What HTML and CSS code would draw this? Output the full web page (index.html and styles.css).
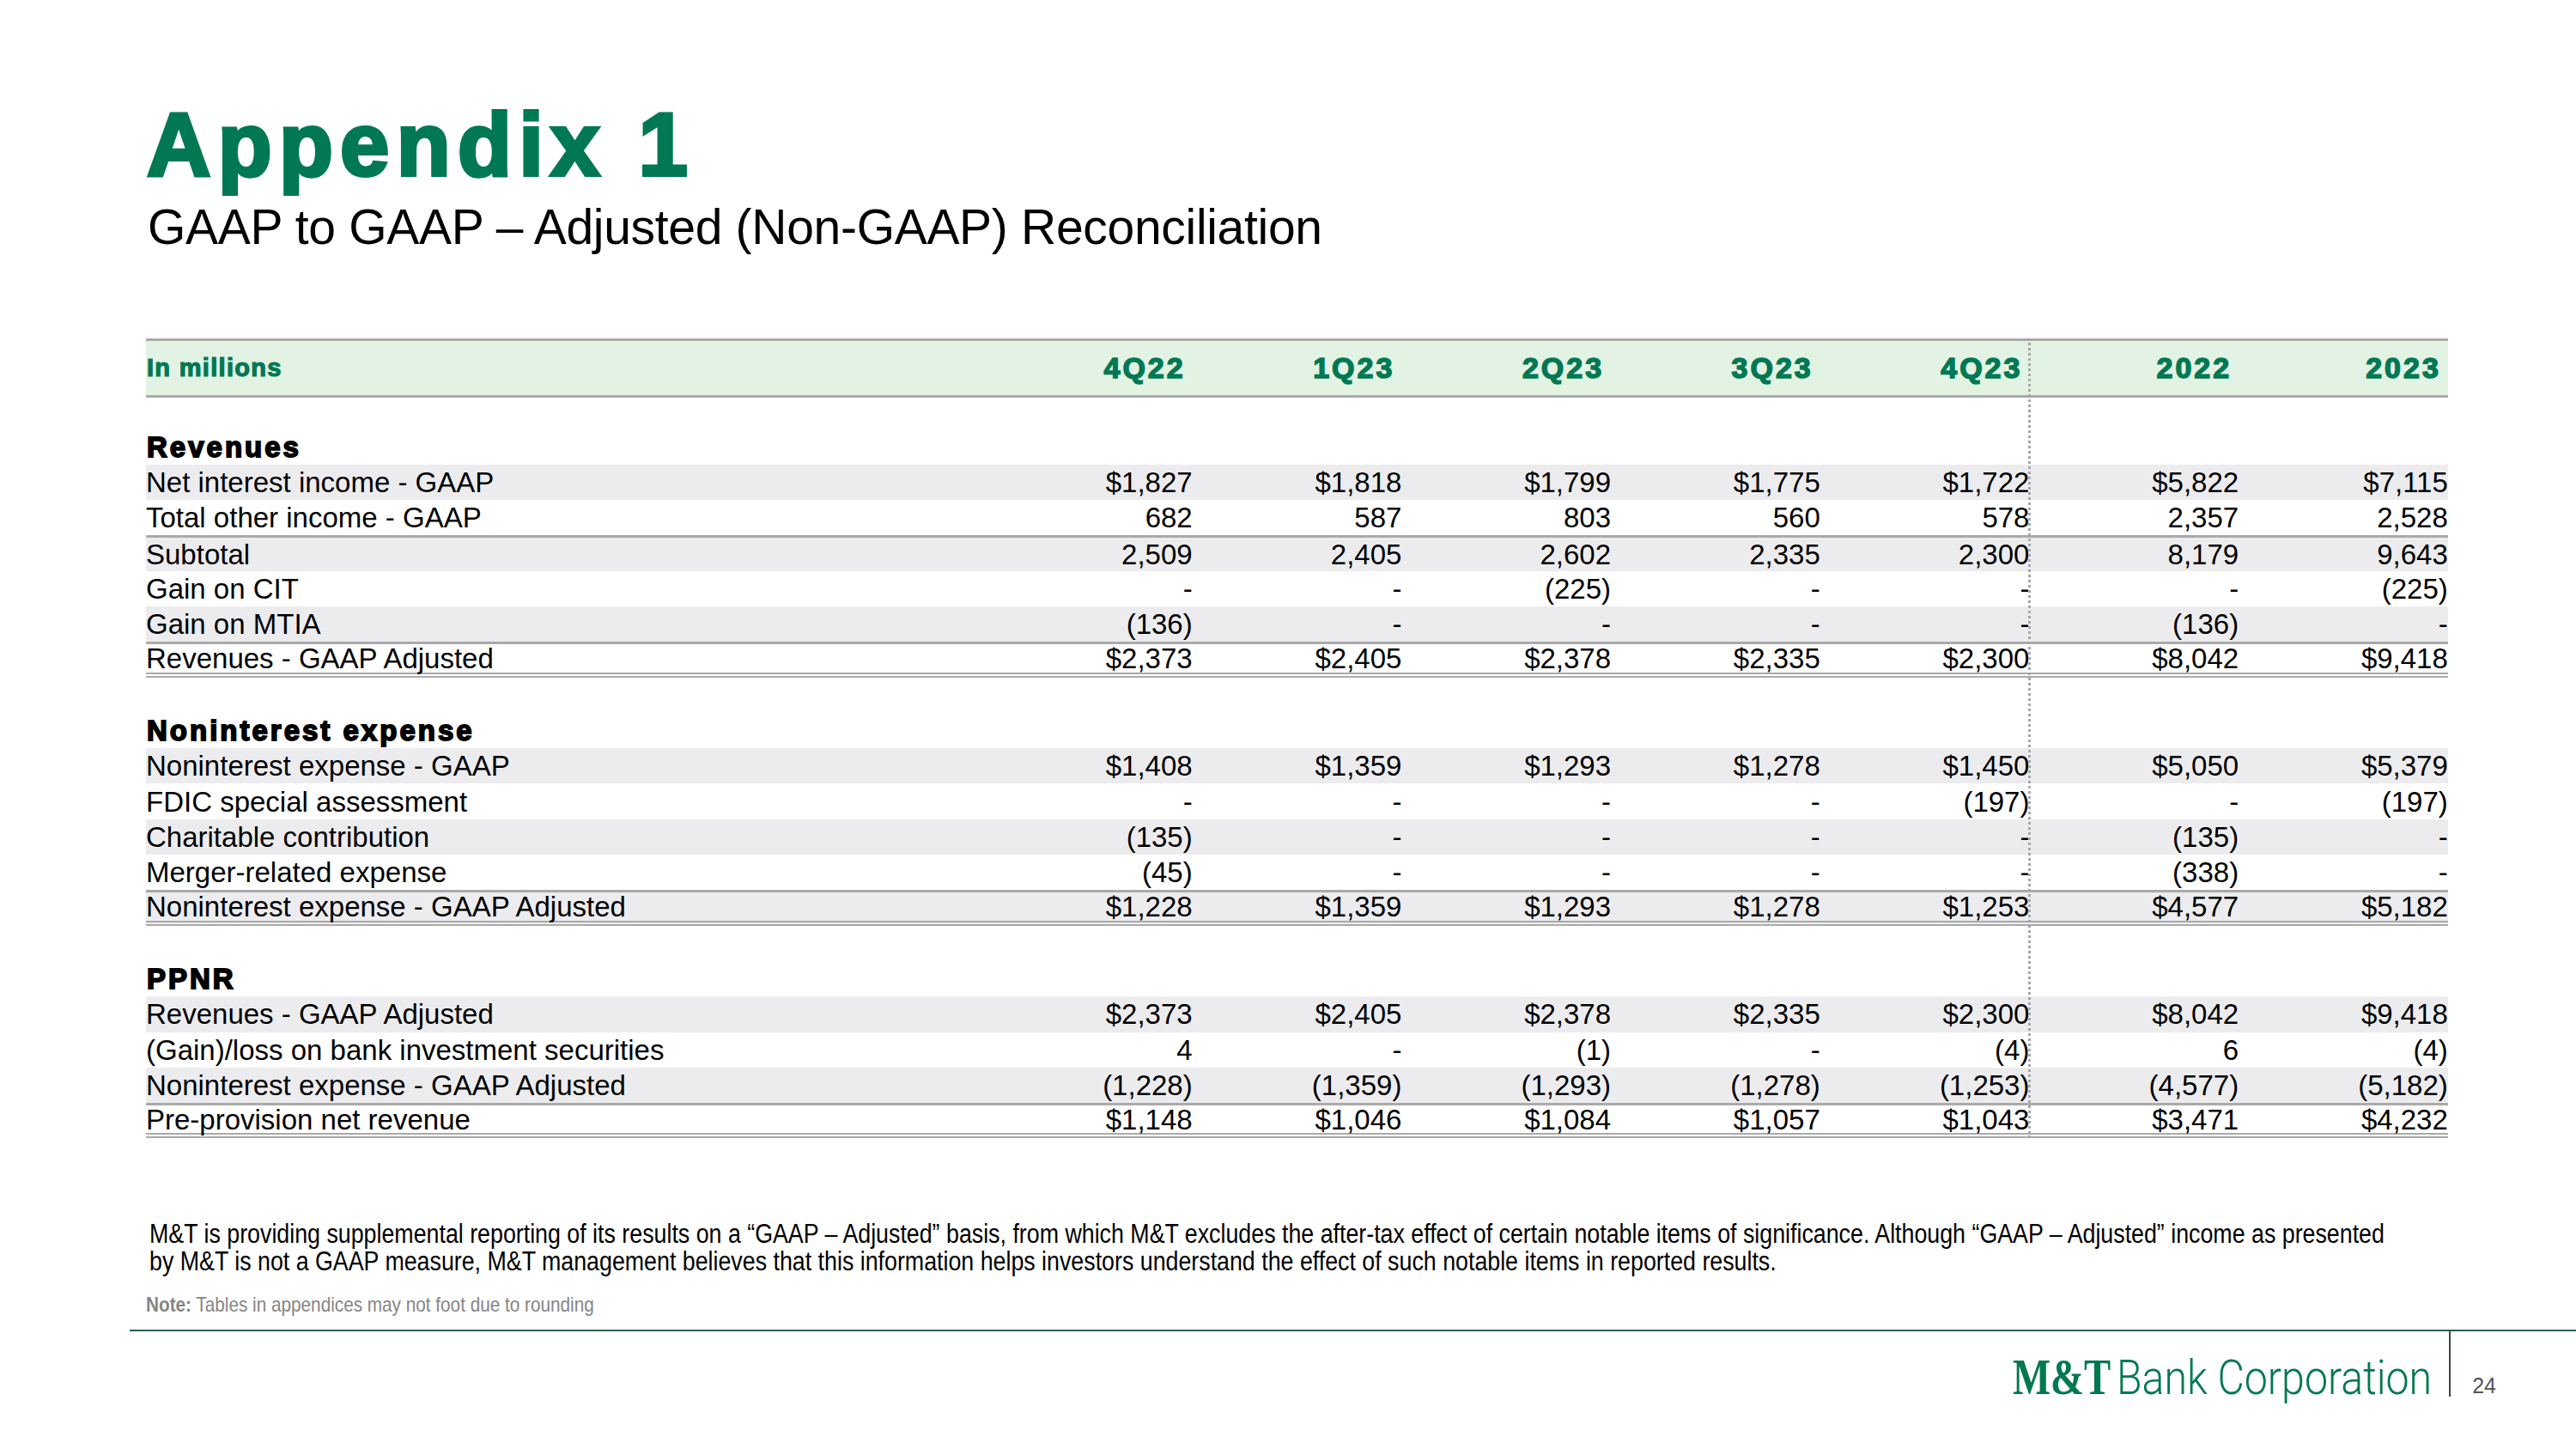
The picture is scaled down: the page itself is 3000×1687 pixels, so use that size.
FILE: index.html
```html
<!DOCTYPE html>
<html lang="en">
<head>
<meta charset="utf-8">
<title>Appendix 1</title>
<link rel="stylesheet" href="styles.css">
</head>
<body>
<div class="slide">
  <div class="content">
    <h1 class="title">Appendix 1</h1>
    <h2 class="subtitle">GAAP to GAAP – Adjusted (Non-GAAP) Reconciliation</h2>

    <div class="table">
      <div class="divider-dotted"></div>
      <div class="row head">
        <div class="lbl">In millions</div>
        <div class="num">4Q22</div><div class="num">1Q23</div><div class="num">2Q23</div><div class="num">3Q23</div><div class="num">4Q23</div><div class="num">2022</div><div class="num">2023</div>
      </div>
      <div class="spacer-top"></div>

      <div class="row section"><div class="lbl">Revenues</div></div>
      <div class="row shade"><div class="lbl">Net interest income - GAAP</div><div class="num">$1,827</div><div class="num">$1,818</div><div class="num">$1,799</div><div class="num">$1,775</div><div class="num">$1,722</div><div class="num">$5,822</div><div class="num">$7,115</div></div>
      <div class="row"><div class="lbl">Total other income - GAAP</div><div class="num">682</div><div class="num">587</div><div class="num">803</div><div class="num">560</div><div class="num">578</div><div class="num">2,357</div><div class="num">2,528</div></div>
      <div class="row shade rule"><div class="lbl">Subtotal</div><div class="num">2,509</div><div class="num">2,405</div><div class="num">2,602</div><div class="num">2,335</div><div class="num">2,300</div><div class="num">8,179</div><div class="num">9,643</div></div>
      <div class="row"><div class="lbl">Gain on CIT</div><div class="num">-</div><div class="num">-</div><div class="num">(225)</div><div class="num">-</div><div class="num">-</div><div class="num">-</div><div class="num">(225)</div></div>
      <div class="row shade"><div class="lbl">Gain on MTIA</div><div class="num">(136)</div><div class="num">-</div><div class="num">-</div><div class="num">-</div><div class="num">-</div><div class="num">(136)</div><div class="num">-</div></div>
      <div class="row rule dbl"><div class="lbl">Revenues - GAAP Adjusted</div><div class="num">$2,373</div><div class="num">$2,405</div><div class="num">$2,378</div><div class="num">$2,335</div><div class="num">$2,300</div><div class="num">$8,042</div><div class="num">$9,418</div></div>
      <div class="row blank"></div>

      <div class="row section"><div class="lbl">Noninterest expense</div></div>
      <div class="row shade"><div class="lbl">Noninterest expense - GAAP</div><div class="num">$1,408</div><div class="num">$1,359</div><div class="num">$1,293</div><div class="num">$1,278</div><div class="num">$1,450</div><div class="num">$5,050</div><div class="num">$5,379</div></div>
      <div class="row"><div class="lbl">FDIC special assessment</div><div class="num">-</div><div class="num">-</div><div class="num">-</div><div class="num">-</div><div class="num">(197)</div><div class="num">-</div><div class="num">(197)</div></div>
      <div class="row shade"><div class="lbl">Charitable contribution</div><div class="num">(135)</div><div class="num">-</div><div class="num">-</div><div class="num">-</div><div class="num">-</div><div class="num">(135)</div><div class="num">-</div></div>
      <div class="row"><div class="lbl">Merger-related expense</div><div class="num">(45)</div><div class="num">-</div><div class="num">-</div><div class="num">-</div><div class="num">-</div><div class="num">(338)</div><div class="num">-</div></div>
      <div class="row shade rule dbl"><div class="lbl">Noninterest expense - GAAP Adjusted</div><div class="num">$1,228</div><div class="num">$1,359</div><div class="num">$1,293</div><div class="num">$1,278</div><div class="num">$1,253</div><div class="num">$4,577</div><div class="num">$5,182</div></div>
      <div class="row blank"></div>

      <div class="row section"><div class="lbl">PPNR</div></div>
      <div class="row shade"><div class="lbl">Revenues - GAAP Adjusted</div><div class="num">$2,373</div><div class="num">$2,405</div><div class="num">$2,378</div><div class="num">$2,335</div><div class="num">$2,300</div><div class="num">$8,042</div><div class="num">$9,418</div></div>
      <div class="row"><div class="lbl">(Gain)/loss on bank investment securities</div><div class="num">4</div><div class="num">-</div><div class="num">(1)</div><div class="num">-</div><div class="num">(4)</div><div class="num">6</div><div class="num">(4)</div></div>
      <div class="row shade"><div class="lbl">Noninterest expense - GAAP Adjusted</div><div class="num">(1,228)</div><div class="num">(1,359)</div><div class="num">(1,293)</div><div class="num">(1,278)</div><div class="num">(1,253)</div><div class="num">(4,577)</div><div class="num">(5,182)</div></div>
      <div class="row rule dbl"><div class="lbl">Pre-provision net revenue</div><div class="num">$1,148</div><div class="num">$1,046</div><div class="num">$1,084</div><div class="num">$1,057</div><div class="num">$1,043</div><div class="num">$3,471</div><div class="num">$4,232</div></div>
    </div>

    <p class="disclosure">M&amp;T is providing supplemental reporting of its results on a “GAAP – Adjusted” basis, from which M&amp;T excludes the after-tax effect of certain notable items of significance. Although “GAAP – Adjusted” income as presented<br>by M&amp;T is not a GAAP measure, M&amp;T management believes that this information helps investors understand the effect of such notable items in reported results.</p>
    <p class="note"><b>Note:</b> Tables in appendices may not foot due to rounding</p>
  </div>

  <div class="footer">
    <div class="footer-rule"></div>
    <div class="footer-row">
      <div class="logo">
        <span class="logo-mt-box"><span class="logo-mt">M&amp;T</span></span>
        <span class="logo-name-box"><span class="logo-name">Bank Corporation</span></span>
      </div>
      <div class="vbar"></div>
      <div class="page-num">24</div>
    </div>
  </div>
</div>
</body>
</html>
```

FILE: styles.css
```css
* { box-sizing: border-box; }

html, body {
  margin: 0;
  padding: 0;
  background: #ffffff;
}

body {
  font-family: "Liberation Sans", Arial, sans-serif;
  color: #000;
}

.slide {
  width: 3000px;
  height: 1687px;
  overflow: hidden;
  display: flex;
  flex-direction: column;
  background: #fff;
}

.content {
  padding-left: 170px;
  padding-right: 149px;
}

.title {
  margin: 117px 0 0 1px;
  font-size: 103px;
  line-height: 104px;
  font-weight: 700;
  color: #007853;
  letter-spacing: 8.3px;
  -webkit-text-stroke: 4px #007853;
}

.subtitle {
  margin: 14px 0 0 2px;
  font-size: 57px;
  line-height: 58px;
  font-weight: 400;
  letter-spacing: -0.3px;
  color: #000;
}

.table {
  position: relative;
  margin-top: 101px;
  width: 2681px;
}

.divider-dotted {
  position: absolute;
  left: 2192px;
  top: 0;
  bottom: 0;
  width: 0;
  border-left: 3px dotted #a7a7a7;
}

.row {
  display: grid;
  grid-template-columns: 975px repeat(7, 243.7px);
  align-items: center;
  height: 41.3px;
  font-size: 33px;
  line-height: 33px;
  color: #000;
}

.row .lbl {
  white-space: nowrap;
}

.row .num {
  text-align: right;
  white-space: nowrap;
}

.row.head {
  height: 69px;
  background: #e3f3e3;
  border-top: 3px solid #a9aaa9;
  border-bottom: 3px solid #a9aaa9;
  color: #007853;
  font-weight: 700;
}

.row.head .lbl {
  font-size: 29px;
  letter-spacing: 1.3px;
  -webkit-text-stroke: 1.2px #007853;
  padding-left: 1px;
}

.row.head .num {
  font-size: 34px;
  letter-spacing: 3px;
  -webkit-text-stroke: 1.5px #007853;
  padding-right: 8px;
}

.spacer-top {
  height: 36.5px;
}

.row.section .lbl {
  font-weight: 700;
  letter-spacing: 3px;
  -webkit-text-stroke: 1.8px #000;
  padding-left: 1px;
}

.row.shade {
  background: #ececee;
}

.row.rule {
  border-top: 3px solid #a9aaa9;
}

.row.dbl {
  border-bottom: 6px double #a9aaa9;
}

.disclosure {
  margin: 96px 0 0 4px;
  width: 3300px;
  font-size: 31px;
  line-height: 32px;
  color: #000;
  white-space: nowrap;
  transform: scaleX(0.864);
  transform-origin: left top;
}

.note {
  margin: 21px 0 0 0;
  font-size: 24px;
  line-height: 26px;
  color: #858585;
  white-space: nowrap;
  transform: scaleX(0.864);
  transform-origin: left top;
}

.note b {
  font-weight: 700;
}

.footer {
  margin-top: auto;
  height: 139px;
}

.footer-rule {
  margin-left: 151px;
  height: 2px;
  background: #2c5f4d;
}

.footer-row {
  display: flex;
  justify-content: flex-end;
  align-items: flex-start;
  padding-right: 93px;
}

.logo {
  display: flex;
  align-items: baseline;
  margin-top: 23px;
  color: #00794f;
  line-height: 60px;
  white-space: nowrap;
}

.logo-mt-box {
  display: inline-block;
  width: 114px;
}

.logo-mt {
  display: inline-block;
  font-family: "Liberation Serif", "Times New Roman", serif;
  font-weight: 700;
  font-size: 60px;
  transform: scaleX(0.778);
  transform-origin: left center;
}

.logo-name-box {
  display: inline-block;
  width: 368px;
  margin-left: 7px;
}

.logo-name {
  display: inline-block;
  font-family: Roboto, "Liberation Sans", sans-serif;
  font-weight: 300;
  font-size: 56px;
  transform: scaleX(0.862);
  transform-origin: left center;
}

.vbar {
  width: 2px;
  height: 76px;
  margin-left: 19px;
  background: #3a4a44;
}

.page-num {
  margin-top: 51px;
  margin-left: 25px;
  font-size: 25px;
  line-height: 25px;
  color: #555555;
}
```
